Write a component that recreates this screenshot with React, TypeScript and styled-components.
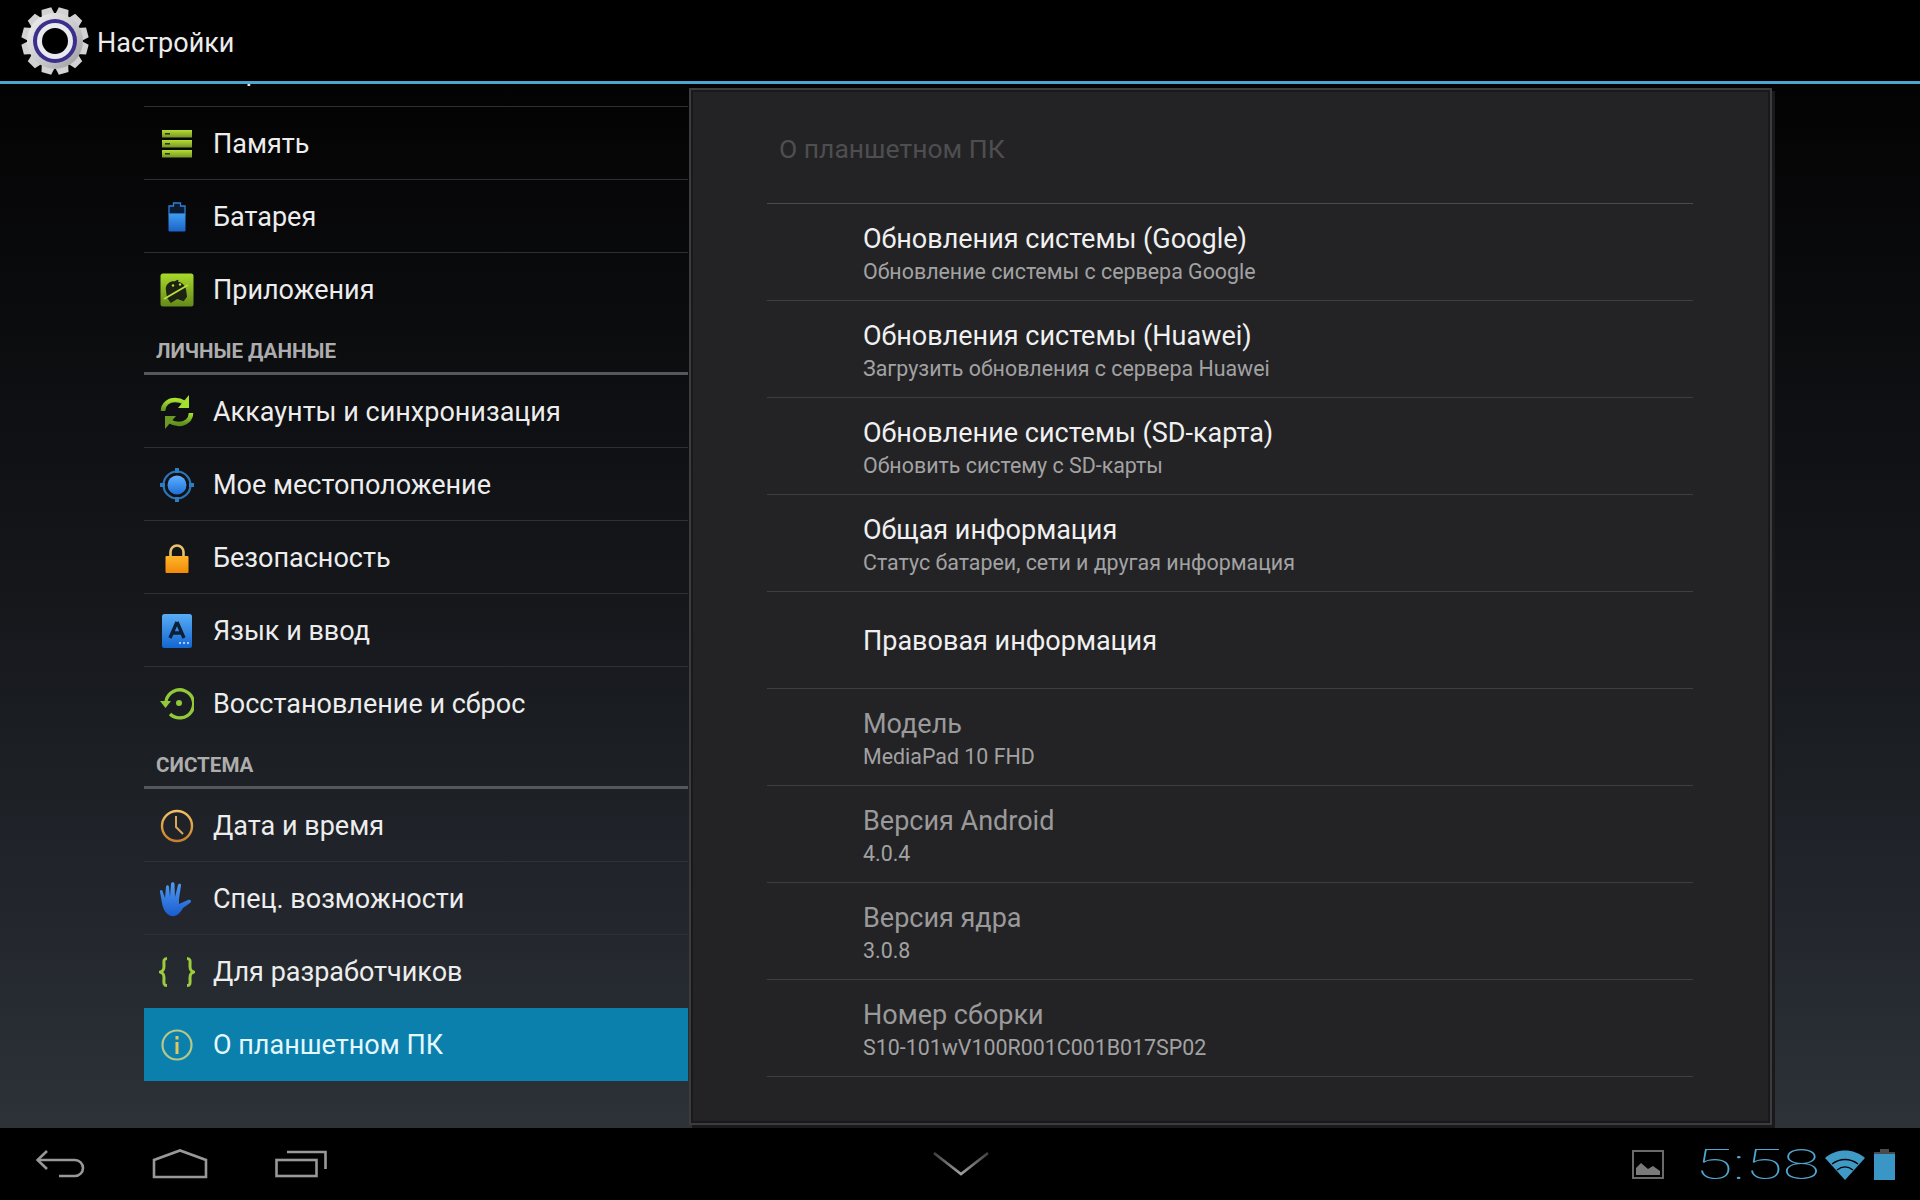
import React from "react";
import styled, { createGlobalStyle } from "styled-components";

const GlobalStyle = createGlobalStyle`
  html, body {
    margin: 0;
    padding: 0;
    background: #000;
  }
  * {
    box-sizing: border-box;
  }
`;

const Screen = styled.div`
  width: 1920px;
  height: 1200px;
  display: flex;
  flex-direction: column;
  overflow: hidden;
  font-family: Roboto, "Noto Sans", sans-serif;
  background: linear-gradient(180deg, #000 0, #050506 140px, #15171b 600px, #22262c 900px, #2c3237 1128px);
`;

const ActionBar = styled.header`
  height: 84px;
  flex: none;
  display: flex;
  align-items: center;
  background: #000;
  border-bottom: 3px solid #4fa4cf;
  padding: 0 0 0 21px;
  position: relative;
  z-index: 2;
`;

const AppTitle = styled.h1`
  margin: 5px 0 0 8px;
  font-size: 27px;
  font-weight: 400;
  color: #ececec;
`;

const Content = styled.main`
  flex: 1;
  min-height: 0;
  display: flex;
  padding-left: 144px;
`;

const ListClip = styled.div`
  width: 544px;
  flex: none;
  overflow: hidden;
`;

const List = styled.nav`
  margin-top: -50px;
`;

const Heading = styled.div`
  height: 49px;
  display: flex;
  align-items: center;
  padding: 3px 0 0 12px;
  border-bottom: 3px solid #55575a;
  font-size: 20.6px;
  font-weight: 700;
  color: #adadad;
`;

const NavRow = styled.div<{ $active?: boolean; $plain?: boolean }>`
  height: 73px;
  padding-top: 2px;
  display: flex;
  align-items: center;
  border-bottom: 1px solid ${(p) => (p.$plain || p.$active ? "transparent" : "#2e3033")};
  background: ${(p) => (p.$active ? "#0b80ac" : "transparent")};
  color: ${(p) => (p.$active ? "#e4f8ff" : "#ededed")};
  font-size: 27px;
`;

const IconSlot = styled.span`
  width: 65px;
  height: 40px;
  margin-right: 4px;
  flex: none;
  display: flex;
  align-items: center;
  justify-content: center;
  svg {
    display: block;
  }
`;

const Dialog = styled.section`
  width: 1083px;
  height: 1037px;
  flex: none;
  margin: 4px 0 0 1px;
  border: 2px solid #3c3c3e;
  box-shadow: inset 0 0 0 2px #19191b, 3px 3px 0 #19191b;
  background: #232326;
  padding: 0 77px 0 76px;
`;

const DialogTitle = styled.h2`
  height: 114px;
  margin: 0;
  padding: 4px 0 0 12px;
  display: flex;
  align-items: center;
  font-size: 26.5px;
  font-weight: 400;
  color: #4e4e50;
  border-bottom: 1px solid #4a4a4c;
`;

const InfoRow = styled.div`
  height: 97px;
  padding: 2px 0 0 96px;
  display: flex;
  flex-direction: column;
  justify-content: center;
  gap: 3px;
  border-bottom: 1px solid #3e3e40;
`;

const InfoTitle = styled.div<{ $muted?: boolean }>`
  font-size: 27px;
  line-height: 34px;
  color: ${(p) => (p.$muted ? "#9a9a9a" : "#f0f0f0")};
`;

const InfoSub = styled.div`
  font-size: 21.4px;
  line-height: 26px;
  color: #a2a2a2;
`;

const SystemBar = styled.footer`
  height: 72px;
  flex: none;
  background: #000;
  display: grid;
  grid-template-columns: 897px auto 1fr;
  align-items: center;
  padding: 0 25px 0 36px;
`;

const NavButtons = styled.div`
  display: flex;
  align-items: center;
  gap: 66px;
  svg {
    display: block;
  }
  svg:last-child {
    margin-left: 1px;
  }
`;

const HideButton = styled.div`
  svg {
    display: block;
  }
`;

const StatusArea = styled.div`
  display: flex;
  align-items: center;
  justify-content: flex-end;
  gap: 9px;
  svg {
    display: block;
  }
`;

const Clock = styled.span`
  width: 121px;
  margin-left: 22px;
  display: block;
  font-size: 43px;
  font-weight: 100;
  line-height: 44px;
  color: #4fa8d4;
  transform: scaleX(1.6);
  transform-origin: left center;
  white-space: nowrap;
`;

function GearLogo() {
  const teeth = Array.from({ length: 12 }, (_, i) => i * 30 + 15);
  return (
    <svg width="68" height="68" viewBox="0 0 68 68">
      <defs>
        <linearGradient id="gearFill" x1="0" y1="0" x2="1" y2="1">
          <stop offset="0" stopColor="#f2f2f2" />
          <stop offset="0.55" stopColor="#c9c9cb" />
          <stop offset="1" stopColor="#98989c" />
        </linearGradient>
      </defs>
      {teeth.map((deg) => (
        <path key={deg} d="M29 0.5h10l2 9h-14z" fill="#d2d2d4" transform={`rotate(${deg} 34 34)`} />
      ))}
      <circle cx="34" cy="34" r="28" fill="url(#gearFill)" />
      <circle cx="34" cy="34" r="22" fill="#3a2f8c" />
      <circle cx="34" cy="34" r="18" fill="#e9e9f0" />
      <circle cx="34" cy="34" r="13" fill="#000" />
    </svg>
  );
}

function ScreenIcon() {
  return (
    <svg width="30" height="30" viewBox="0 0 30 30">
      <circle cx="15" cy="15" r="11" fill="#f2c14e" />
    </svg>
  );
}

function StorageIcon() {
  return (
    <svg width="30" height="28" viewBox="0 0 30 28">
      <defs>
        <linearGradient id="storageFill" x1="0" y1="0" x2="0" y2="1">
          <stop offset="0" stopColor="#b5de2e" />
          <stop offset="1" stopColor="#76942a" />
        </linearGradient>
      </defs>
      {[0, 10, 20].map((y) => (
        <g key={y}>
          <rect x="0" y={y} width="30" height="7.5" fill="url(#storageFill)" />
          <rect x="3" y={y + 3} width="5" height="1.6" fill="#2d3a10" />
        </g>
      ))}
    </svg>
  );
}

function BatteryIcon() {
  return (
    <svg width="18" height="30" viewBox="0 0 18 30">
      <defs>
        <linearGradient id="batteryFill" x1="0" y1="0" x2="0" y2="1">
          <stop offset="0" stopColor="#3d9df0" />
          <stop offset="1" stopColor="#1c62c8" />
        </linearGradient>
      </defs>
      <path d="M5.5 1h7v3h4.5v8H1V4h4.5z" fill="#0a1c33" stroke="#2f7fd6" strokeWidth="1.3" />
      <rect x="0.5" y="12" width="17" height="17.5" rx="1" fill="url(#batteryFill)" />
    </svg>
  );
}

function AppsIcon() {
  return (
    <svg width="34" height="34" viewBox="0 0 34 34">
      <defs>
        <linearGradient id="appsFill" x1="0" y1="0" x2="0" y2="1">
          <stop offset="0" stopColor="#a9d92b" />
          <stop offset="1" stopColor="#65891b" />
        </linearGradient>
      </defs>
      <rect x="0.5" y="0.5" width="33" height="33" rx="2.5" fill="url(#appsFill)" />
      <path d="M6 14c1-5 6-7 10-6l3-1 1 1-1 1c4 1 6 4 7 8v8l-4 4-6-3-7 3-3-6z" fill="#1d2212" transform="rotate(-8 17 17)" />
      <path d="M4 26L28 12" stroke="#b7df3c" strokeWidth="2" />
      <circle cx="13" cy="12.5" r="1.2" fill="#b7df3c" />
      <circle cx="20" cy="11.5" r="1.2" fill="#b7df3c" />
    </svg>
  );
}

function SyncIcon() {
  return (
    <svg width="34" height="36" viewBox="0 0 34 36">
      <defs>
        <linearGradient id="syncFill" x1="0" y1="0" x2="0" y2="1">
          <stop offset="0" stopColor="#a6e02f" />
          <stop offset="1" stopColor="#5f8f1f" />
        </linearGradient>
      </defs>
      <g fill="none" stroke="url(#syncFill)" strokeWidth="4.5">
        <path d="M3 17c0-7 6-11 12-11 3 0 6 .5 9 2.500" />
        <path d="M31 19c0 7-6 11-12 11-3 0-6-.5-9-2.500" />
      </g>
      <path d="M29 1v13H18z" fill="#a6e02f" />
      <path d="M5 35V22h11z" fill="#6a9a22" />
    </svg>
  );
}

function LocationIcon() {
  return (
    <svg width="34" height="34" viewBox="0 0 34 34">
      <defs>
        <linearGradient id="locationFill" x1="0" y1="0" x2="0" y2="1">
          <stop offset="0" stopColor="#5fb0ff" />
          <stop offset="1" stopColor="#1f6fd6" />
        </linearGradient>
      </defs>
      <circle cx="17" cy="17" r="13.500" fill="none" stroke="#2c75b8" strokeWidth="2.2" />
      <circle cx="17" cy="17" r="9.500" fill="url(#locationFill)" />
      <path d="M15 0h4v5h-4zM15 29h4v5h-4zM0 15h5v4H0zM29 15h5v4h-5z" fill="#2f7cc2" />
    </svg>
  );
}

function LockIcon() {
  return (
    <svg width="24" height="29" viewBox="0 0 24 29">
      <defs>
        <linearGradient id="lockFill" x1="0" y1="0" x2="0" y2="1">
          <stop offset="0" stopColor="#ffb52a" />
          <stop offset="1" stopColor="#f08a0a" />
        </linearGradient>
      </defs>
      <path d="M5.500 13V8a6.500 6.500 0 0 1 13 0v5" fill="none" stroke="#e7c26a" strokeWidth="2.6" />
      <rect x="0.500" y="12" width="23" height="17" rx="1" fill="url(#lockFill)" />
    </svg>
  );
}

function LanguageIcon() {
  return (
    <svg width="30" height="34" viewBox="0 0 30 34">
      <defs>
        <linearGradient id="languageFill" x1="0" y1="0" x2="0" y2="1">
          <stop offset="0" stopColor="#58adf5" />
          <stop offset="1" stopColor="#1466d2" />
        </linearGradient>
      </defs>
      <rect width="30" height="34" rx="2.500" fill="url(#languageFill)" />
      <path d="M15 8L8 24M15 8l7 16M10.500 19h9" fill="none" stroke="#0d2036" strokeWidth="3.400" />
      <path d="M17 29h2M21 29h2M25 29h2" stroke="#d7ecff" strokeWidth="1.400" />
    </svg>
  );
}

function RestoreIcon() {
  return (
    <svg width="34" height="32" viewBox="0 0 34 32">
      <path d="M6 13A14 14 0 1 1 10 26" fill="none" stroke="#92c83a" strokeWidth="3.400" />
      <path d="M0 13h11l-5.500 7z" fill="#92c83a" />
      <circle cx="19" cy="15" r="3" fill="#92c83a" />
    </svg>
  );
}

function ClockIcon() {
  return (
    <svg width="34" height="34" viewBox="0 0 34 34">
      <defs>
        <linearGradient id="clockStroke" x1="0" y1="0" x2="0" y2="1">
          <stop offset="0" stopColor="#f3c063" />
          <stop offset="1" stopColor="#c77f2b" />
        </linearGradient>
      </defs>
      <circle cx="17" cy="17" r="15" fill="none" stroke="url(#clockStroke)" strokeWidth="2.400" />
      <path d="M16 7v11l7 7" fill="none" stroke="#d9a557" strokeWidth="2" />
    </svg>
  );
}

function HandIcon() {
  return (
    <svg width="36" height="36" viewBox="0 0 36 36">
      <defs>
        <linearGradient id="handFill" x1="0" y1="0" x2="0" y2="1">
          <stop offset="0" stopColor="#4f9cf3" />
          <stop offset="1" stopColor="#1a5ccf" />
        </linearGradient>
      </defs>
      <path
        d="M12 35C6 33 4 27 3 22L1 11c-.5-2 2-3 2.500-1L6 17 7 6c0-2.500 3-2.500 3 0l1 10 1-13c0-2.500 3.500-2.500 3.500 0L16 16l3-12c.5-2 3.500-1.500 3 .5L20 18v5l9-4c3-1 4 1.500 2 3l-7 5c-3 5-6 9-12 8z"
        fill="url(#handFill)"
      />
    </svg>
  );
}

function BracesIcon() {
  return (
    <svg width="36" height="30" viewBox="0 0 36 30">
      <g fill="none" stroke="#9ccb3c" strokeWidth="3">
        <path d="M8 1.500C4 1.500 5 5 5 9c0 4-1 5-3.500 6C4 16 5 17 5 21c0 4-1 7.500 3 7.500" />
        <path d="M28 1.500c4 0 3 3.500 3 7.500 0 4 1 5 3.500 6-2.500 1-3.500 2-3.500 6 0 4 1 7.500-3 7.500" />
      </g>
    </svg>
  );
}

function InfoIcon() {
  return (
    <svg width="32" height="32" viewBox="0 0 32 32">
      <circle cx="16" cy="16" r="14.500" fill="none" stroke="#b6c78a" strokeWidth="2.200" />
      <rect x="14.500" y="7" width="3" height="3.500" fill="#e2c65e" />
      <rect x="14.500" y="13" width="3" height="12" fill="#e2c65e" />
    </svg>
  );
}

function BackIcon() {
  return (
    <svg width="50" height="28" viewBox="0 0 50 28" fill="none" stroke="#989898" strokeWidth="2.600">
      <path d="M11 1L1.500 10 11 19" />
      <path d="M1.500 10H39a7.500 7.500 0 0 1 0 16H23" />
    </svg>
  );
}

function HomeIcon() {
  return (
    <svg width="56" height="30" viewBox="0 0 56 30" fill="none" stroke="#989898" strokeWidth="2.600">
      <path d="M2 28V11L28 1.500 54 11v17z" />
    </svg>
  );
}

function RecentsIcon() {
  return (
    <svg width="52" height="28" viewBox="0 0 52 28" fill="none" stroke="#989898" strokeWidth="2.600">
      <rect x="1.500" y="10" width="40" height="16" />
      <path d="M12 2h38.500v17" />
    </svg>
  );
}

function HideIcon() {
  return (
    <svg width="56" height="24" viewBox="0 0 56 24" fill="none">
      <defs>
        <linearGradient id="hideStroke" x1="0" y1="0" x2="0" y2="1">
          <stop offset="0" stopColor="#3f3f3f" />
          <stop offset="1" stopColor="#a0a0a0" />
        </linearGradient>
      </defs>
      <path d="M1 1l27 21L55 1" stroke="url(#hideStroke)" strokeWidth="2.600" />
    </svg>
  );
}

function PictureIcon() {
  return (
    <svg width="32" height="29" viewBox="0 0 32 29">
      <rect x="1" y="1" width="30" height="27" fill="none" stroke="#6a6a6a" strokeWidth="2" />
      <path d="M4 25v-7l5-5 7 6 5-3 7 5v4z" fill="#7a7a7a" />
    </svg>
  );
}

function WifiIcon() {
  return (
    <svg width="40" height="31" viewBox="0 0 40 31">
      <path d="M0 9C11-1 29-1 40 9L20 31z" fill="#3f9ac6" />
      <g fill="none" stroke="#000" strokeWidth="1.300">
        <path d="M7 15c8-6 18-6 26 0" />
        <path d="M12 21c5-4 11-4 16 0" />
      </g>
    </svg>
  );
}

function SignalBattery() {
  return (
    <svg width="21" height="31" viewBox="0 0 21 31">
      <path d="M6 0h9v3h6v3H0V3h6z" fill="#4a4a4a" />
      <rect y="5" width="21" height="26" fill="#3a96c4" />
    </svg>
  );
}

type MenuEntry = { kind: "row"; label: string; icon: React.ReactNode; plain?: boolean; active?: boolean } | { kind: "heading"; label: string };

const menu: MenuEntry[] = [
  { kind: "row", label: "Экран", icon: <ScreenIcon /> },
  { kind: "row", label: "Память", icon: <StorageIcon /> },
  { kind: "row", label: "Батарея", icon: <BatteryIcon /> },
  { kind: "row", label: "Приложения", icon: <AppsIcon />, plain: true },
  { kind: "heading", label: "ЛИЧНЫЕ ДАННЫЕ" },
  { kind: "row", label: "Аккаунты и синхронизация", icon: <SyncIcon /> },
  { kind: "row", label: "Мое местоположение", icon: <LocationIcon /> },
  { kind: "row", label: "Безопасность", icon: <LockIcon /> },
  { kind: "row", label: "Язык и ввод", icon: <LanguageIcon /> },
  { kind: "row", label: "Восстановление и сброс", icon: <RestoreIcon />, plain: true },
  { kind: "heading", label: "СИСТЕМА" },
  { kind: "row", label: "Дата и время", icon: <ClockIcon /> },
  { kind: "row", label: "Спец. возможности", icon: <HandIcon /> },
  { kind: "row", label: "Для разработчиков", icon: <BracesIcon />, plain: true },
  { kind: "row", label: "О планшетном ПК", icon: <InfoIcon />, active: true },
];

const infoRows: { title: string; sub?: string; muted?: boolean }[] = [
  { title: "Обновления системы (Google)", sub: "Обновление системы с сервера Google" },
  { title: "Обновления системы (Huawei)", sub: "Загрузить обновления с сервера Huawei" },
  { title: "Обновление системы (SD-карта)", sub: "Обновить систему с SD-карты" },
  { title: "Общая информация", sub: "Статус батареи, сети и другая информация" },
  { title: "Правовая информация" },
  { title: "Модель", sub: "MediaPad 10 FHD", muted: true },
  { title: "Версия Android", sub: "4.0.4", muted: true },
  { title: "Версия ядра", sub: "3.0.8", muted: true },
  { title: "Номер сборки", sub: "S10-101wV100R001C001B017SP02", muted: true },
];

export default function App() {
  return (
    <Screen>
      <GlobalStyle />
      <ActionBar>
        <GearLogo />
        <AppTitle>Настройки</AppTitle>
      </ActionBar>
      <Content>
        <ListClip>
          <List>
            {menu.map((item) =>
              item.kind === "heading" ? (
                <Heading key={item.label}>{item.label}</Heading>
              ) : (
                <NavRow key={item.label} $plain={item.plain} $active={item.active}>
                  <IconSlot>{item.icon}</IconSlot>
                  {item.label}
                </NavRow>
              ),
            )}
          </List>
        </ListClip>
        <Dialog>
          <DialogTitle>О планшетном ПК</DialogTitle>
          {infoRows.map((row) => (
            <InfoRow key={row.title}>
              <InfoTitle $muted={row.muted}>{row.title}</InfoTitle>
              {row.sub && <InfoSub>{row.sub}</InfoSub>}
            </InfoRow>
          ))}
        </Dialog>
      </Content>
      <SystemBar>
        <NavButtons>
          <BackIcon />
          <HomeIcon />
          <RecentsIcon />
        </NavButtons>
        <HideButton>
          <HideIcon />
        </HideButton>
        <StatusArea>
          <PictureIcon />
          <Clock>5:58</Clock>
          <WifiIcon />
          <SignalBattery />
        </StatusArea>
      </SystemBar>
    </Screen>
  );
}
